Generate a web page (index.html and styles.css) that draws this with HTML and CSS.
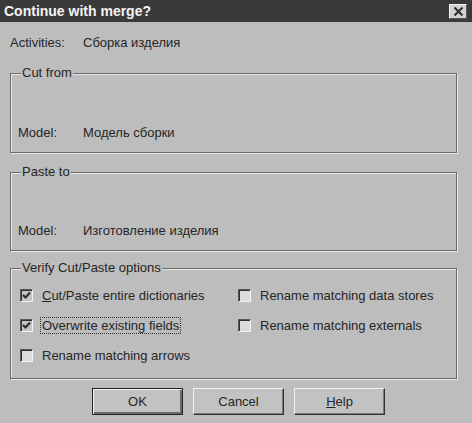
FILE: index.html
```html
<!DOCTYPE html>
<html>
<head>
<meta charset="utf-8">
<link rel="stylesheet" href="styles.css">
</head>
<body>
<div class="dialog">
  <div class="titlebar">
    <span class="title">Continue with merge?</span>
    <span class="close"><svg width="11" height="9" viewBox="0 0 11 9"><path d="M1.5 0.5 L9.5 8.5 M9.5 0.5 L1.5 8.5" stroke="#2a2a2a" stroke-width="2"/></svg></span>
  </div>
  <div class="row activities">
    <span class="label">Activities:</span>
    <span class="value">Сборка изделия</span>
  </div>
  <div class="group g-cut">
    <span class="legend">Cut from</span>
    <div class="row model">
      <span class="label small">Model:</span>
      <span class="value">Модель сборки</span>
    </div>
  </div>
  <div class="group g-paste">
    <span class="legend">Paste to</span>
    <div class="row model">
      <span class="label small">Model:</span>
      <span class="value">Изготовление изделия</span>
    </div>
  </div>
  <div class="group g-verify">
    <span class="legend">Verify Cut/Paste options</span>
    <div class="options">
      <div class="opt"><span class="box checked"><svg width="9" height="9" viewBox="0 0 9 9"><path d="M1 4 L3.5 6.5 L8 1.5" stroke="#2a2a2a" stroke-width="2" fill="none"/></svg></span><span><u>C</u>ut/Paste entire dictionaries</span></div>
      <div class="opt"><span class="box"></span><span>Rename matching data stores</span></div>
      <div class="opt"><span class="box checked"><svg width="9" height="9" viewBox="0 0 9 9"><path d="M1 4 L3.5 6.5 L8 1.5" stroke="#2a2a2a" stroke-width="2" fill="none"/></svg></span><span class="focus">Overwrite existing fields</span></div>
      <div class="opt"><span class="box"></span><span>Rename matching externals</span></div>
      <div class="opt"><span class="box"></span><span>Rename matching arrows</span></div>
    </div>
  </div>
  <div class="buttons">
    <button class="btn default">OK</button>
    <button class="btn">Cancel</button>
    <button class="btn"><u>H</u>elp</button>
  </div>
</div>
</body>
</html>
```
FILE: styles.css
```css
html, body {
  margin: 0;
  padding: 0;
  background: #bcbcbc;
}
.dialog {
  width: 472px;
  height: 423px;
  background: #bdbdbd;
  font-family: "Liberation Sans", Arial, sans-serif;
  font-size: 13px;
  color: #262626;
  display: flex;
  flex-direction: column;
  overflow: hidden;
}
.titlebar {
  height: 22px;
  background: #3a3a3a;
  display: flex;
  align-items: center;
  justify-content: space-between;
  padding: 0 5px 0 4px;
  flex: none;
}
.title {
  color: #f4f4f4;
  font-weight: bold;
  font-size: 14px;
}
.close {
  width: 16px;
  height: 13px;
  background: #d2d2d2;
  border-top: 1px solid #f0f0f0;
  border-left: 1px solid #f0f0f0;
  border-right: 1px solid #555;
  border-bottom: 1px solid #555;
  display: flex;
  align-items: center;
  justify-content: center;
}
.row {
  display: flex;
  align-items: center;
  height: 16px;
}
.activities {
  margin: 12px 0 0 10px;
}
.label {
  width: 73px;
  flex: none;
}
.label.small {
  width: 65px;
}
.group {
  margin-left: 10px;
  width: 447px;
  box-sizing: border-box;
  border: 1px solid #6a6a6a;
  box-shadow: inset 1px 1px 0 #e6e6e6, 1px 1px 0 #e6e6e6;
  display: flex;
  flex-direction: column;
  flex: none;
}
.legend {
  align-self: flex-start;
  margin: -8px 0 0 10px;
  padding: 0 1px;
  background: #bdbdbd;
  line-height: 14px;
}
.g-cut {
  margin-top: 23px;
  height: 80px;
  justify-content: space-between;
  padding-bottom: 12px;
}
.g-paste {
  margin-top: 19px;
  height: 79px;
  justify-content: space-between;
  padding-bottom: 12px;
}
.model {
  margin-left: 7px;
}
.g-verify {
  margin-top: 17px;
  height: 111px;
}
.options {
  margin: 12px 0 0 9px;
  display: grid;
  grid-template-columns: 218px 1fr;
  grid-auto-rows: 16px;
  row-gap: 14px;
}
.opt {
  display: flex;
  align-items: center;
}
.box {
  width: 11px;
  height: 11px;
  background: #dcdcdc;
  border-top: 1px solid #5a5a5a;
  border-left: 1px solid #5a5a5a;
  border-right: 1px solid #f2f2f2;
  border-bottom: 1px solid #f2f2f2;
  box-shadow: inset 1px 1px 0 #2e2e2e;
  margin-right: 9px;
  display: flex;
  align-items: center;
  justify-content: center;
  flex: none;
}
.box.checked {
  background: #c4c4c4;
}
.focus {
  outline: 1px dotted #333;
  outline-offset: 0;
  padding: 0 1px;
  margin-left: -1px;
}
.buttons {
  display: flex;
  gap: 10px;
  margin: 9px 0 0 92px;
}
.btn {
  width: 91px;
  height: 27px;
  font-family: "Liberation Sans", Arial, sans-serif;
  font-size: 13px;
  color: #262626;
  background: #c2c2c2;
  border-top: 1px solid #f2f2f2;
  border-left: 1px solid #f2f2f2;
  border-right: 1px solid #333;
  border-bottom: 1px solid #333;
  box-shadow: inset -1px -1px 0 #7a7a7a;
  padding: 0;
}
.btn.default {
  border: 1px solid #222;
  box-shadow: inset 1px 1px 0 #f2f2f2, inset -2px -2px 0 #6a6a6a;
}
```
